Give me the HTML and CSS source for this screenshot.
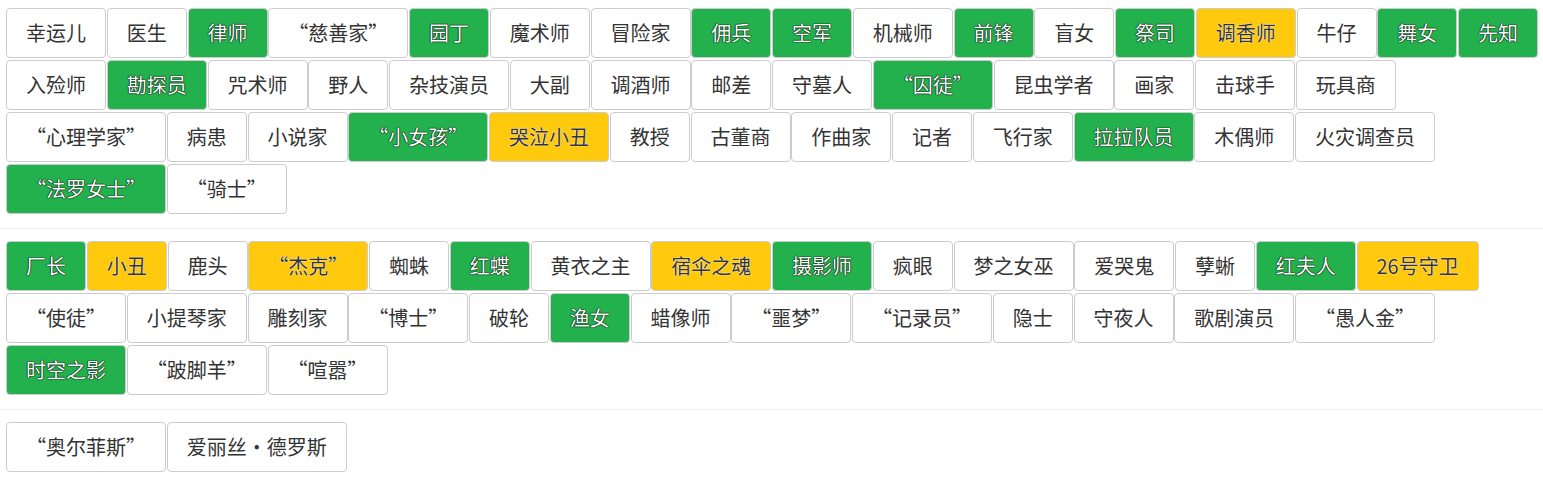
FILE: index.html
```html
<!DOCTYPE html>
<html lang="zh-CN">
<head>
<meta charset="utf-8">
<title>角色</title>
<link rel="stylesheet" href="styles.css">
</head>
<body>
<section class="group">
  <div class="tags">
    <span class="tag">幸运儿</span>
    <span class="tag">医生</span>
    <span class="tag green">律师</span>
    <span class="tag">“慈善家”</span>
    <span class="tag green">园丁</span>
    <span class="tag">魔术师</span>
    <span class="tag">冒险家</span>
    <span class="tag green">佣兵</span>
    <span class="tag green">空军</span>
    <span class="tag">机械师</span>
    <span class="tag green">前锋</span>
    <span class="tag">盲女</span>
    <span class="tag green">祭司</span>
    <span class="tag yellow">调香师</span>
    <span class="tag">牛仔</span>
    <span class="tag green">舞女</span>
    <span class="tag green">先知</span>
    <span class="tag">入殓师</span>
    <span class="tag green">勘探员</span>
    <span class="tag">咒术师</span>
    <span class="tag">野人</span>
    <span class="tag">杂技演员</span>
    <span class="tag">大副</span>
    <span class="tag">调酒师</span>
    <span class="tag">邮差</span>
    <span class="tag">守墓人</span>
    <span class="tag green">“囚徒”</span>
    <span class="tag">昆虫学者</span>
    <span class="tag">画家</span>
    <span class="tag">击球手</span>
    <span class="tag">玩具商</span>
    <span class="tag">“心理学家”</span>
    <span class="tag">病患</span>
    <span class="tag">小说家</span>
    <span class="tag green">“小女孩”</span>
    <span class="tag yellow">哭泣小丑</span>
    <span class="tag">教授</span>
    <span class="tag">古董商</span>
    <span class="tag">作曲家</span>
    <span class="tag">记者</span>
    <span class="tag">飞行家</span>
    <span class="tag green">拉拉队员</span>
    <span class="tag">木偶师</span>
    <span class="tag">火灾调查员</span>
    <span class="tag green">“法罗女士”</span>
    <span class="tag">“骑士”</span>
  </div>
</section>
<section class="group">
  <div class="tags">
    <span class="tag green">厂长</span>
    <span class="tag yellow">小丑</span>
    <span class="tag">鹿头</span>
    <span class="tag yellow">“杰克”</span>
    <span class="tag">蜘蛛</span>
    <span class="tag green">红蝶</span>
    <span class="tag">黄衣之主</span>
    <span class="tag yellow">宿伞之魂</span>
    <span class="tag green">摄影师</span>
    <span class="tag">疯眼</span>
    <span class="tag">梦之女巫</span>
    <span class="tag">爱哭鬼</span>
    <span class="tag">孽蜥</span>
    <span class="tag green">红夫人</span>
    <span class="tag yellow">26号守卫</span>
    <span class="tag">“使徒”</span>
    <span class="tag">小提琴家</span>
    <span class="tag">雕刻家</span>
    <span class="tag">“博士”</span>
    <span class="tag">破轮</span>
    <span class="tag green">渔女</span>
    <span class="tag">蜡像师</span>
    <span class="tag">“噩梦”</span>
    <span class="tag">“记录员”</span>
    <span class="tag">隐士</span>
    <span class="tag">守夜人</span>
    <span class="tag">歌剧演员</span>
    <span class="tag">“愚人金”</span>
    <span class="tag green">时空之影</span>
    <span class="tag">“跛脚羊”</span>
    <span class="tag">“喧嚣”</span>
  </div>
</section>
<section class="group last">
  <div class="tags">
    <span class="tag">“奥尔菲斯”</span>
    <span class="tag">爱丽丝·德罗斯</span>
  </div>
</section>
</body>
</html>
```
FILE: styles.css
```css
html, body {
  margin: 0;
  padding: 0;
  background: #fff;
}

body {
  font-family: "Noto Sans CJK SC", "Noto Sans", sans-serif;
  color: #333;
}

.group {
  padding: 8px 2px 14px 6px;
  border-bottom: 1px solid #eee;
}

.group + .group {
  padding-top: 12px;
}

.group.last {
  border-bottom: none;
}

.tags {
  display: flex;
  flex-wrap: wrap;
  column-gap: 0.75px;
  row-gap: 2px;
}

.tag {
  box-sizing: border-box;
  height: 50px;
  display: flex;
  align-items: center;
  justify-content: center;
  padding: 0 19px;
  border: 1px solid #ccc;
  border-radius: 4px;
  background: #fff;
  font-size: 20px;
  line-height: 1;
  color: #333;
  white-space: nowrap;
}

.tag.green {
  background: #22b14c;
  color: #fff;
  text-shadow: 0 0 1px #000, 0 0 1px #000, 0 0 1px #000;
}

.tag.yellow {
  background: #ffc90e;
  color: #333;
  text-shadow: 0 0 1px #fff, 0 0 1px #fff;
}
```
